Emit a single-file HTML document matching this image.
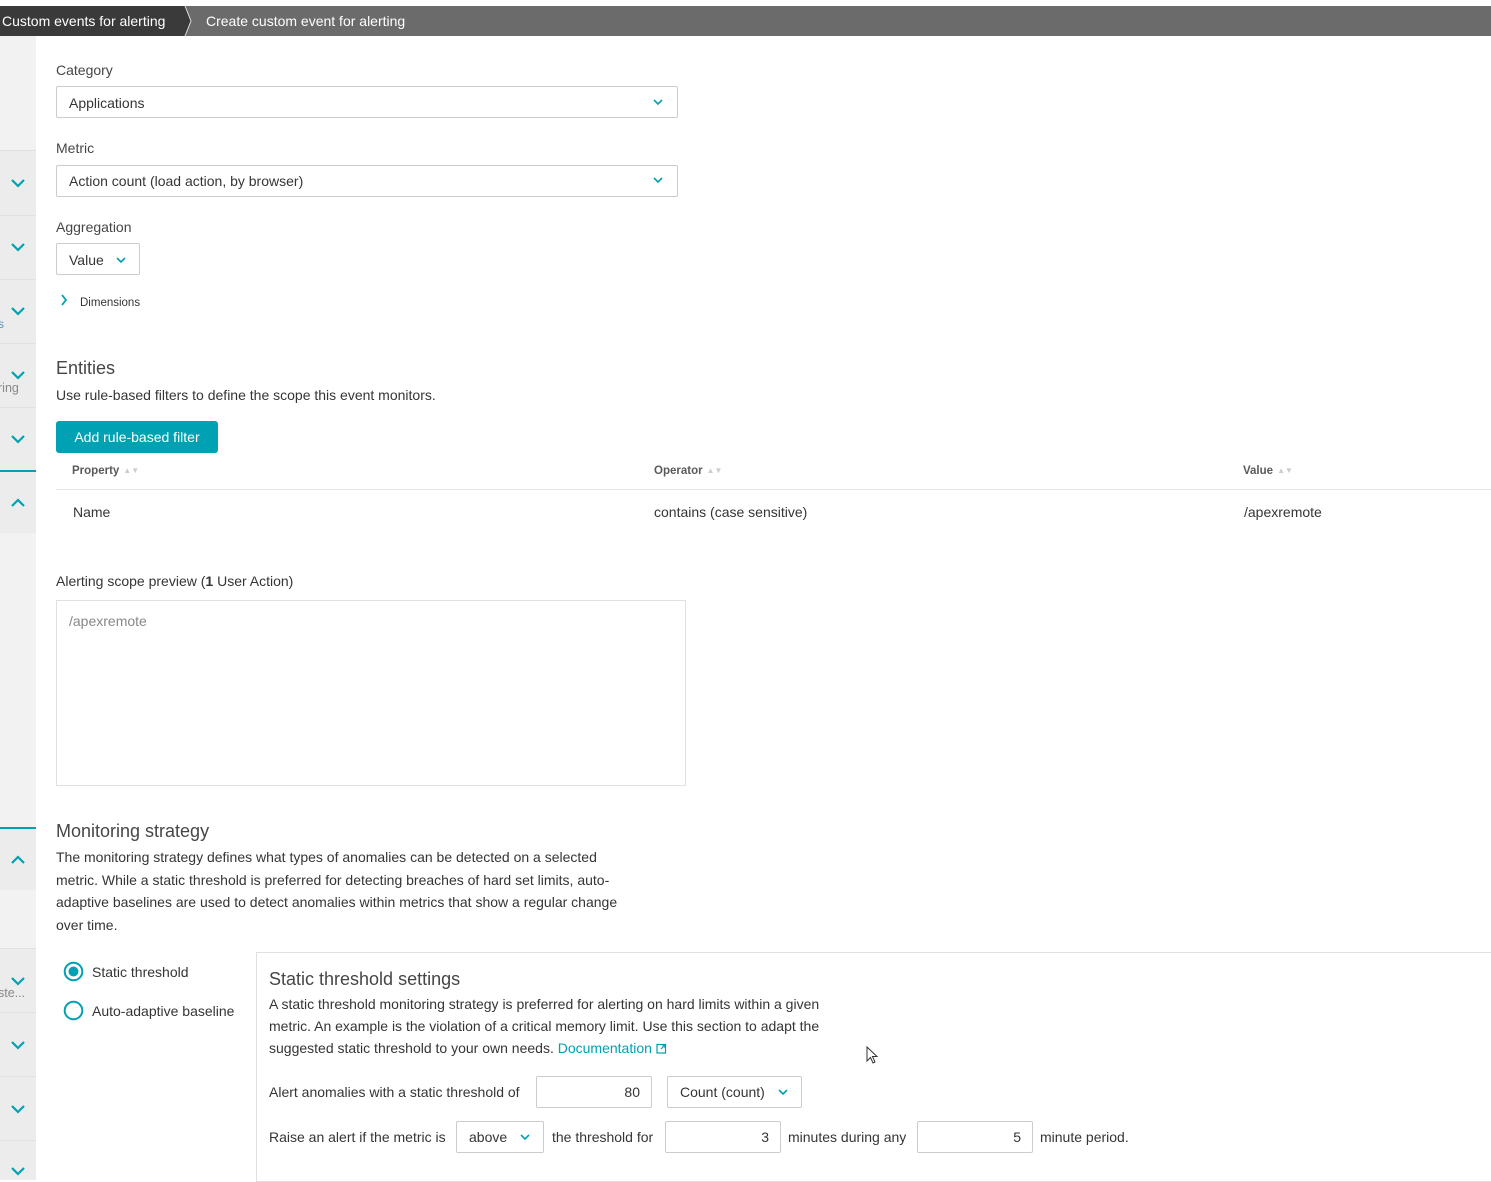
<!DOCTYPE html>
<html><head><meta charset="utf-8"><style>
*{box-sizing:border-box;margin:0;padding:0}
body{width:1491px;height:1172px;overflow:hidden;background:#fff;font-family:"Liberation Sans",sans-serif;font-size:14px;color:#353535;position:relative}
.a{position:absolute;white-space:nowrap}
.side{position:absolute;left:0;width:36px}
.sec{position:absolute;left:0;width:36px;background:#ececec;border-top:1px solid #e0e0e0}
.chev{position:absolute;left:11px;width:14px;height:10px}
.box{position:absolute;border:1px solid #ccc;border-radius:2px;background:#fff}
.dd{position:absolute;width:10px;height:7px}
.lbl{color:#454646}
.th{font-size:11.5px;color:#5a5a5a;font-weight:bold}
.sort{display:inline-block;color:#ccc;font-size:8px;margin-left:4px;vertical-align:1px}
</style></head><body>
<div class="a" style="left:0;top:6px;width:1491px;height:30px;background:#6b6b6b"></div>
<div class="a" style="left:0;top:6px;width:185px;height:30px;background:#3a3a3a"></div>
<svg class="a" style="left:180px;top:6px" width="14" height="30"><polygon points="0,0 5,0 11,15 5,30 0,30" fill="#3a3a3a"/><polyline points="5,0 11,15 5,30" fill="none" stroke="#ddd" stroke-width="1"/></svg>
<div class="a" style="left:2px;top:13px;color:#fff;font-size:14px">Custom events for alerting</div>
<div class="a" style="left:206px;top:13px;color:#fff;font-size:14px">Create custom event for alerting</div>
<div class="side" style="top:36px;height:1136px;background:#f2f2f2"></div>
<div class="sec" style="top:150px;height:65px"></div>
<div class="sec" style="top:215px;height:64px"></div>
<div class="sec" style="top:279px;height:64px"></div>
<div class="sec" style="top:343px;height:64px"></div>
<div class="sec" style="top:407px;height:64px"></div>
<div class="side" style="top:470px;height:2px;background:#00a1b2"></div>
<div class="side" style="top:472px;height:61px;background:#ececec"></div>
<div class="side" style="top:827px;height:2px;background:#00a1b2"></div>
<div class="side" style="top:829px;height:61px;background:#ececec"></div>
<div class="sec" style="top:948px;height:64px"></div>
<div class="sec" style="top:1012px;height:64px"></div>
<div class="sec" style="top:1076px;height:64px"></div>
<div class="sec" style="top:1140px;height:40px"></div>
<svg class="chev" style="top:178px" viewBox="0 0 14 10"><polyline points="1,2 7,8 13,2" fill="none" stroke="#00a1b2" stroke-width="2.2"/></svg>
<svg class="chev" style="top:242px" viewBox="0 0 14 10"><polyline points="1,2 7,8 13,2" fill="none" stroke="#00a1b2" stroke-width="2.2"/></svg>
<svg class="chev" style="top:306px" viewBox="0 0 14 10"><polyline points="1,2 7,8 13,2" fill="none" stroke="#00a1b2" stroke-width="2.2"/></svg>
<svg class="chev" style="top:370px" viewBox="0 0 14 10"><polyline points="1,2 7,8 13,2" fill="none" stroke="#00a1b2" stroke-width="2.2"/></svg>
<svg class="chev" style="top:434px" viewBox="0 0 14 10"><polyline points="1,2 7,8 13,2" fill="none" stroke="#00a1b2" stroke-width="2.2"/></svg>
<svg class="chev" style="top:498px" viewBox="0 0 14 10"><polyline points="1,8 7,2 13,8" fill="none" stroke="#00a1b2" stroke-width="2.2"/></svg>
<svg class="chev" style="top:855px" viewBox="0 0 14 10"><polyline points="1,8 7,2 13,8" fill="none" stroke="#00a1b2" stroke-width="2.2"/></svg>
<svg class="chev" style="top:976px" viewBox="0 0 14 10"><polyline points="1,2 7,8 13,2" fill="none" stroke="#00a1b2" stroke-width="2.2"/></svg>
<svg class="chev" style="top:1040px" viewBox="0 0 14 10"><polyline points="1,2 7,8 13,2" fill="none" stroke="#00a1b2" stroke-width="2.2"/></svg>
<svg class="chev" style="top:1104px" viewBox="0 0 14 10"><polyline points="1,2 7,8 13,2" fill="none" stroke="#00a1b2" stroke-width="2.2"/></svg>
<svg class="chev" style="top:1166px" viewBox="0 0 14 10"><polyline points="1,2 7,8 13,2" fill="none" stroke="#00a1b2" stroke-width="2.2"/></svg>
<div class="a" style="left:-2px;top:381px;color:#888;font-size:12.5px">ring</div>
<div class="a" style="left:-2px;top:317px;color:#5a8fc0;font-size:12px">s</div>
<div class="a" style="left:-2px;top:986px;color:#888;font-size:12.5px">ste...</div>

<div class="a lbl" style="left:56px;top:62px">Category</div>
<div class="box" style="left:56px;top:86px;width:622px;height:32px"></div>
<div class="a" style="left:69px;top:95px">Applications</div>
<svg class="dd" style="left:653px;top:99px" viewBox="0 0 10 7"><polyline points="1,1 5,5 9,1" fill="none" stroke="#00a1b2" stroke-width="1.6"/></svg>
<div class="a lbl" style="left:56px;top:140px">Metric</div>
<div class="box" style="left:56px;top:165px;width:622px;height:32px"></div>
<div class="a" style="left:69px;top:173px">Action count (load action, by browser)</div>
<svg class="dd" style="left:653px;top:177px" viewBox="0 0 10 7"><polyline points="1,1 5,5 9,1" fill="none" stroke="#00a1b2" stroke-width="1.6"/></svg>
<div class="a lbl" style="left:56px;top:219px">Aggregation</div>
<div class="box" style="left:56px;top:243px;width:84px;height:32px"></div>
<div class="a" style="left:69px;top:252px">Value</div>
<svg class="dd" style="left:116px;top:257px" viewBox="0 0 10 7"><polyline points="1,1 5,5 9,1" fill="none" stroke="#00a1b2" stroke-width="1.6"/></svg>
<svg class="a" style="left:60px;top:294px" width="8" height="12"><polyline points="2,1 6,6 2,11" fill="none" stroke="#00a1b2" stroke-width="1.8"/></svg>
<div class="a" style="left:80px;top:297px;font-size:11.5px">Dimensions</div>

<div class="a" style="left:56px;top:358px;font-size:18px;color:#454646">Entities</div>
<div class="a" style="left:56px;top:387px">Use rule-based filters to define the scope this event monitors.</div>
<div class="a" style="left:56px;top:421px;width:162px;height:32px;background:#00a1b2;border-radius:3px;color:#fff;text-align:center;line-height:33px">Add rule-based filter</div>
<div class="a th" style="left:72px;top:465px">Property<span class="sort">▲▼</span></div>
<div class="a th" style="left:654px;top:465px">Operator<span class="sort">▲▼</span></div>
<div class="a th" style="left:1243px;top:465px">Value<span class="sort">▲▼</span></div>
<div class="a" style="left:56px;top:489px;width:1435px;height:1px;background:#e6e6e6"></div>
<div class="a" style="left:73px;top:504px">Name</div>
<div class="a" style="left:654px;top:504px">contains (case sensitive)</div>
<div class="a" style="left:1244px;top:504px">/apexremote</div>

<div class="a" style="left:56px;top:573px">Alerting scope preview (<b>1</b> User Action)</div>
<div class="a" style="left:56px;top:600px;width:630px;height:186px;border:1px solid #e0e0e0"></div>
<div class="a" style="left:69px;top:613px;color:#888">/apexremote</div>

<div class="a" style="left:56px;top:821px;font-size:18px;color:#454646">Monitoring strategy</div>
<div class="a" style="left:56px;top:846px;line-height:22.5px">The monitoring strategy defines what types of anomalies can be detected on a selected<br>metric. While a static threshold is preferred for detecting breaches of hard set limits, auto-<br>adaptive baselines are used to detect anomalies within metrics that show a regular change<br>over time.</div>

<svg class="a" style="left:63px;top:961px" width="21" height="21"><circle cx="10.5" cy="10.5" r="8.8" fill="none" stroke="#00a1b2" stroke-width="2"/><circle cx="10.5" cy="10.5" r="5" fill="#00a1b2"/></svg>
<div class="a" style="left:92px;top:964px">Static threshold</div>
<svg class="a" style="left:63px;top:1000px" width="21" height="21"><circle cx="10.5" cy="10.5" r="8.8" fill="none" stroke="#00a1b2" stroke-width="2"/></svg>
<div class="a" style="left:92px;top:1003px">Auto-adaptive baseline</div>

<div class="a" style="left:256px;top:952px;width:1240px;height:230px;border:1px solid #e0e0e0"></div>
<div class="a" style="left:269px;top:969px;font-size:18px;color:#454646">Static threshold settings</div>
<div class="a" style="left:269px;top:993px;line-height:22px">A static threshold monitoring strategy is preferred for alerting on hard limits within a given<br>metric. An example is the violation of a critical memory limit. Use this section to adapt the<br>suggested static threshold to your own needs. <span style="color:#00a1b2">Documentation</span> <svg width="11" height="11" style="vertical-align:-1px"><rect x="1" y="1.5" width="8.5" height="8.5" fill="none" stroke="#00a1b2" stroke-width="1.2"/><polyline points="5,6 9,2 6,2 9,2 9,5" fill="none" stroke="#00a1b2" stroke-width="1.2"/></svg></div>
<svg class="a" style="left:866px;top:1046px" width="14" height="20"><polygon points="1,1 1,15 4.5,11.5 7,17 9,16 6.5,10.5 11,10.5" fill="#fff" stroke="#333" stroke-width="1"/></svg>

<div class="a" style="left:269px;top:1084px">Alert anomalies with a static threshold of</div>
<div class="box" style="left:536px;top:1076px;width:116px;height:32px"></div>
<div class="a" style="left:536px;top:1084px;width:104px;text-align:right">80</div>
<div class="box" style="left:667px;top:1076px;width:135px;height:32px"></div>
<div class="a" style="left:680px;top:1084px">Count (count)</div>
<svg class="dd" style="left:778px;top:1089px" viewBox="0 0 10 7"><polyline points="1,1 5,5 9,1" fill="none" stroke="#00a1b2" stroke-width="1.6"/></svg>

<div class="a" style="left:269px;top:1129px">Raise an alert if the metric is</div>
<div class="box" style="left:456px;top:1121px;width:88px;height:32px"></div>
<div class="a" style="left:469px;top:1129px">above</div>
<svg class="dd" style="left:520px;top:1134px" viewBox="0 0 10 7"><polyline points="1,1 5,5 9,1" fill="none" stroke="#00a1b2" stroke-width="1.6"/></svg>
<div class="a" style="left:552px;top:1129px">the threshold for</div>
<div class="box" style="left:665px;top:1121px;width:116px;height:32px"></div>
<div class="a" style="left:665px;top:1129px;width:104px;text-align:right">3</div>
<div class="a" style="left:788px;top:1129px">minutes during any</div>
<div class="box" style="left:917px;top:1121px;width:116px;height:32px"></div>
<div class="a" style="left:917px;top:1129px;width:104px;text-align:right">5</div>
<div class="a" style="left:1040px;top:1129px">minute period.</div>
</body></html>
